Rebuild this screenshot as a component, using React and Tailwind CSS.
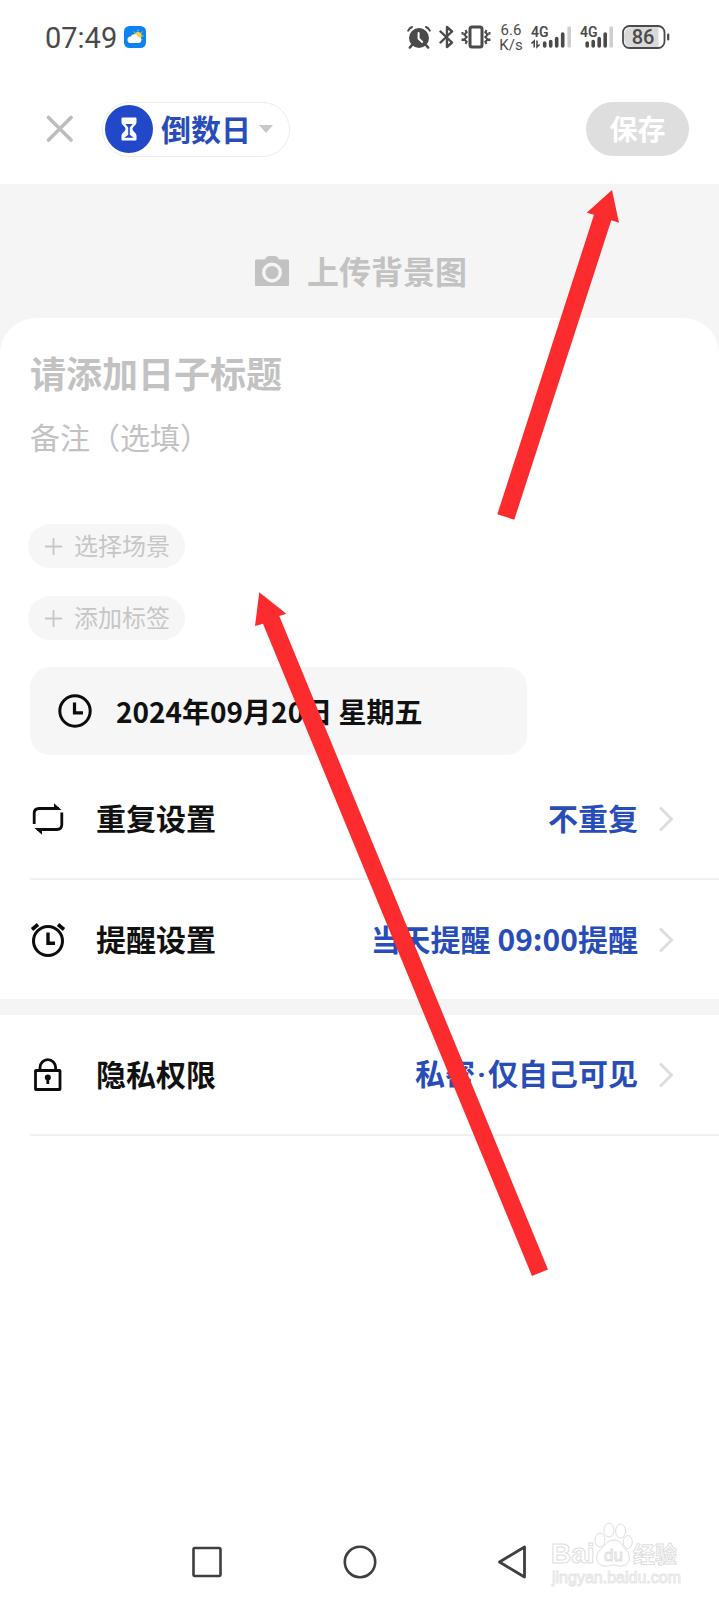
import React, { useState } from "react";

function StatusBar() {
  return (
    <div className="flex h-[74px] items-center justify-between pl-[45px] pr-[49px] text-[#4a4a4a]">
      <div className="flex items-center gap-[7px]">
        <span className="pt-[2px] font-[Roboto,sans-serif] text-[29px] leading-8">07:49</span>
        <svg className="h-[22px] w-[22px]" viewBox="0 0 22 22">
          <rect width="22" height="22" rx="5.5" fill="#0a84f2" />
          <path d="M14 3.6v2M9.6 5.6l1.4 1.2M18.6 5.6l-1.4 1.2M19.6 10h-1.8M18.4 14l-1-1" stroke="#f8cf4a" strokeWidth="0.9" />
          <circle cx="14" cy="9.6" r="3.7" fill="#f8cf4a" />
          <path d="M7 17a3.3 3.3 0 0 1-.4-6.6 4.2 4.2 0 0 1 7.6.6 3 3 0 0 1 .3 6z" fill="#fff" />
        </svg>
      </div>

      <div className="flex items-center">
        <svg className="h-6 w-6" viewBox="0 0 24 24" fill="none" stroke="currentColor" strokeLinecap="round">
          <circle cx="12" cy="13" r="10" fill="currentColor" stroke="none" />
          <path d="M5 20l-2.200 2.600M19 20l2.200 2.600" strokeWidth="2.400" />
          <path d="M1.200 5.600Q2.600 3 5 2M22.800 5.600Q21.400 3 19 2" strokeWidth="2" />
          <path d="M11.600 8v5.500l3.600 3.400" stroke="#fff" strokeWidth="2" />
        </svg>
        <svg className="ml-2 h-6 w-4" viewBox="0 0 16 24" fill="none" stroke="currentColor" strokeWidth="2.400" strokeLinecap="round" strokeLinejoin="round">
          <path d="M1.500 6.500L13 17.500l-5 4.500V2l5 4.500L1.500 17.500" />
        </svg>
        <svg className="ml-[6px] h-6 w-[30px]" viewBox="0 0 30 24" fill="none" stroke="currentColor" strokeWidth="2">
          <rect x="9" y="2" width="12" height="20" rx="2" strokeWidth="3" />
          <path d="M4.500 5l1.200 2.200-2.400 2.400 2.400 2.400-2.400 2.400 2.400 2.400-1.200 2.200M1.500 7v2.500M1.500 13.500v2.500M25.500 5l-1.200 2.200 2.400 2.400-2.400 2.400 2.400 2.400-2.400 2.400 1.200 2.200M28.500 7v2.500M28.500 13.500v2.500" strokeWidth="2" />
        </svg>
        <div className="ml-2 flex w-6 flex-col items-center pt-[2px] font-[Roboto,sans-serif] text-[15px] leading-[15px]">
          <span>6.6</span>
          <span>K/s</span>
        </div>
        <svg className="ml-2 h-6 w-[42px]" viewBox="0 0 42 24">
          <text x="0" y="12" fontFamily="Roboto, sans-serif" fontWeight="600" fontSize="14" fill="currentColor">4G</text>
          <path d="M0.500 18.500l2.700-2.500v6.500M6 15.500v6.500l2.700-2.500" stroke="currentColor" fill="none" strokeWidth="1.600" />
          <g stroke="currentColor" strokeWidth="3.600" strokeLinecap="round">
            <path d="M13.700 18v3M19.700 16.500v4.500M25.700 13.500v7.500M31.700 9v12" />
            <path d="M38.200 3v18" stroke="#cfcfcf" />
          </g>
        </svg>
        <svg className="ml-[7px] h-6 w-[34px]" viewBox="0 0 34 24">
          <text x="0" y="12" fontFamily="Roboto, sans-serif" fontWeight="600" fontSize="14" fill="currentColor">4G</text>
          <g stroke="currentColor" strokeWidth="3.600" strokeLinecap="round">
            <path d="M7.200 18v3M13.200 16.500v4.500M19.200 13.500v7.500M25.200 9v12" />
            <path d="M31.200 3v18" stroke="#cfcfcf" />
          </g>
        </svg>
        <svg className="ml-2 h-6 w-12" viewBox="0 0 48 24">
          <path d="M2 12q0-10 8-10h26.500v20H10Q2 22 2 12z" fill="#d9d9d9" />
          <rect x="1" y="1" width="41.500" height="22" rx="6.500" fill="none" stroke="currentColor" strokeWidth="1.800" />
          <path d="M46.200 9.500v5" stroke="currentColor" strokeWidth="2.200" strokeLinecap="round" />
          <text x="21" y="19" textAnchor="middle" fontFamily="Roboto, sans-serif" fontWeight="500" fontSize="20" fill="currentColor">86</text>
        </svg>
      </div>
    </div>
  );
}

function Header() {
  return (
    <header className="flex h-[110px] items-center pl-[46px] pr-[30px]">
      <button type="button" aria-label="关闭">
        <svg className="h-7 w-7" viewBox="0 0 28 28" stroke="#bdbdbd" strokeWidth="3.600" strokeLinecap="round">
          <path d="M2.500 2.500L25 25M25 2.500L2.500 25" />
        </svg>
      </button>
      <button type="button" className="ml-7 flex h-[55px] items-center rounded-full border border-[#ececec] pl-[2px] pr-4">
        <span className="flex h-12 w-12 items-center justify-center rounded-full bg-[#2148c8]">
          <svg className="h-6 w-4" viewBox="0 0 16 24" fill="none">
            <path d="M1.500 0.500h13q1 0 1 1V5c0 3.500-4 4-4 7s4 3.500 4 7v3.500q0 1-1 1h-13q-1 0-1-1V19c0-3.500 4-4 4-7s-4-3.500-4-7V1.500q0-1 1-1z" fill="#fff" />
            <path d="M4.300 7h7.400L8.800 10.500v7.300l4 3H3.200l4-3v-7.300z" fill="#2148c8" />
          </svg>
        </span>
        <span className="ml-2 pb-[3px] text-3xl font-bold leading-9 text-[#284db8]">倒数日</span>
        <svg className="ml-2 h-2 w-[14px]" viewBox="0 0 14 8">
          <path d="M0 0h14L7 8z" fill="#c8c8c8" />
        </svg>
      </button>
      <button type="button" className="ml-auto h-[54px] w-[103px] rounded-full bg-[#dedede] pb-[3px] text-[28px] font-bold leading-8 text-white">
        保存
      </button>
    </header>
  );
}

function Chip({ label }) {
  return (
    <button type="button" className="flex h-11 items-center gap-3 rounded-full bg-[#f6f6f6] pl-[17px] pr-[15px] text-2xl leading-8 text-[#c6c6c6]">
      <svg className="h-[17px] w-[17px]" viewBox="0 0 17 17" stroke="currentColor" strokeWidth="1.800">
        <path d="M8.500 0v17M0 8.500h17" />
      </svg>
      <span className="pb-[2px]">{label}</span>
    </button>
  );
}

function RepeatIcon() {
  return (
    <svg className="h-9 w-9" viewBox="0 0 36 36" fill="none" stroke="#0c0c0c" strokeWidth="2.800">
      <path d="M4.200 23V12.500q0-5 5-5H29" />
      <path d="M31.800 11.500v12q0 5-5 5H7" />
      <path d="M24 2.200l7.500 6.700H24zM12 33.800l-7.500-6.700H12z" fill="#0c0c0c" stroke="none" />
    </svg>
  );
}

function AlarmIcon() {
  return (
    <svg className="h-9 w-9" viewBox="0 0 36 36" fill="none" stroke="#0c0c0c" strokeWidth="3">
      <circle cx="18" cy="19" r="14.500" />
      <path d="M18 10.500v10.800h7" strokeWidth="3.400" />
      <path d="M2 7.500l6-5M34 7.500l-6-5" strokeWidth="3.600" />
    </svg>
  );
}

function LockIcon() {
  return (
    <svg className="h-9 w-9" viewBox="0 0 36 36" fill="none" stroke="#0c0c0c" strokeWidth="2.800">
      <rect x="5.500" y="13.500" width="24.500" height="19" rx="0.500" />
      <path d="M10 13v-2.500a7.800 7.800 0 0 1 15.600 0V13" />
      <circle cx="17.800" cy="20.500" r="3" fill="#0c0c0c" stroke="none" />
      <path d="M17.800 21v6" />
    </svg>
  );
}

function SettingRow({ icon, label, value, line }) {
  return (
    <div className="pl-[30px]">
      <button
        type="button"
        className={
          line
            ? "flex w-full items-center border-b-2 border-[#f1f1f1] pr-[45px] text-3xl font-bold"
            : "flex w-full items-center pr-[45px] text-3xl font-bold"
        }
      >
        <span className="flex h-[119px] items-center">{icon}</span>
        <span className="ml-[30px] pb-[3px] text-[#111]">{label}</span>
        <span className="ml-auto pb-[3px] text-[#284db8]">{value}</span>
        <svg className="ml-5 h-[26px] w-4" viewBox="0 0 16 26" fill="none" stroke="#dedede" strokeWidth="3">
          <path d="M2 1.500L13.500 13 2 24.500" />
        </svg>
      </button>
    </div>
  );
}

function NavBar() {
  return (
    <nav className="mt-auto grid h-[68px] grid-cols-3 px-[130px] pb-2">
      <button type="button" aria-label="最近任务" className="flex items-center justify-center">
        <svg className="h-9 w-9" viewBox="0 0 36 36" fill="none" stroke="#3f3f3f" strokeWidth="2.600">
          <rect x="4.500" y="4" width="27" height="28" rx="1.500" />
        </svg>
      </button>
      <button type="button" aria-label="主屏幕" className="flex items-center justify-center">
        <svg className="h-9 w-9" viewBox="0 0 36 36" fill="none" stroke="#3f3f3f" strokeWidth="2.600">
          <circle cx="18" cy="18" r="15.200" />
        </svg>
      </button>
      <button type="button" aria-label="返回" className="flex items-center justify-center">
        <svg className="h-9 w-9" viewBox="0 0 36 36" fill="none" stroke="#3f3f3f" strokeWidth="2.800" strokeLinejoin="round">
          <path d="M29.500 3v30L4.500 18z" />
        </svg>
      </button>
    </nav>
  );
}

function Watermark() {
  return (
    <svg className="pointer-events-none absolute bottom-0 right-[34px] h-20 w-[140px]" viewBox="0 0 140 80" fill="#fff" stroke="#dedede" strokeWidth="1">
      <text x="6" y="43" fontFamily="Liberation Sans, sans-serif" fontWeight="700" fontSize="28">Bai</text>
      <path d="M69 20c7 0 8 6 12 10 5 4 5 15-4 16-4 1-5-1-9-1s-5 2-9 1c-9-1-9-12-4-16 5-4 7-10 14-10z" />
      <ellipse cx="64" cy="10" rx="5" ry="7" />
      <ellipse cx="75.600" cy="11" rx="5" ry="7" />
      <ellipse cx="55" cy="20" rx="5" ry="7" />
      <ellipse cx="82.700" cy="22" rx="4.600" ry="6.500" />
      <text x="59" y="41" fontFamily="Liberation Sans, sans-serif" fontSize="17">du</text>
      <text x="88" y="42" fontFamily="Noto Sans CJK SC, sans-serif" fontWeight="700" fontSize="22">经验</text>
      <text x="7" y="63" fontFamily="Liberation Sans, sans-serif" fontSize="16" stroke="#e6e6e6">jingyan.baidu.com</text>
    </svg>
  );
}

function Arrows() {
  return (
    <svg className="pointer-events-none absolute left-0 top-0 h-[1600px] w-[719px]" viewBox="0 0 719 1600" fill="#fc2b2d">
      <path d="M612 190l7 32.700-7.700-2.400L514.300 519.700l-17-5.400L594 214.700l-7.300-2z" />
      <path d="M259.300 592.300l27 21.400-7 2.300L548 1269.500l-16 6.500L263 623.700l-8 2.300z" />
    </svg>
  );
}

function App() {
  const [title, setTitle] = useState("");
  const [note, setNote] = useState("");

  return (
    <div className="relative flex min-h-screen flex-col overflow-hidden bg-white font-['Noto_Sans_CJK_SC',sans-serif]">
      <StatusBar />
      <Header />

      <main className="bg-[#f5f5f5]">
        <button type="button" className="flex h-[134px] w-full items-center justify-center gap-[18px] pl-[3px] pt-10 text-[32px] font-bold leading-10 text-[#c2c2c2]">
          <svg className="h-[30px] w-[34px]" viewBox="0 0 34 30">
            <path d="M1 3.500h8.500L12 .8Q12.700 0 14 0h6q1.300 0 2 .8l2.500 2.700H33q1 0 1 1V29q0 1-1 1H1q-1 0-1-1V4.500q0-1 1-1z" fill="#c2c2c2" />
            <circle cx="17" cy="16.500" r="8.300" fill="#c2c2c2" stroke="#f5f5f5" strokeWidth="3.400" />
          </svg>
          <span className="pb-[3px]">上传背景图</span>
        </button>

        <div className="rounded-t-[36px] bg-white pt-[30px]">
          <div className="flex flex-col gap-5 px-[30px]">
            <input
              type="text"
              aria-label="标题"
              placeholder="请添加日子标题"
              value={title}
              onChange={(e) => setTitle(e.target.value)}
              className="h-12 w-full text-4xl font-bold text-[#111] outline-none placeholder:text-[#c2c2c2]"
            />
            <input
              type="text"
              aria-label="备注"
              placeholder="备注（选填）"
              value={note}
              onChange={(e) => setNote(e.target.value)}
              className="h-10 w-full text-3xl text-[#111] outline-none placeholder:text-[#c2c2c2]"
            />
          </div>

          <div className="mt-[68px] flex flex-col items-start gap-7 pl-7">
            <Chip label="选择场景" />
            <Chip label="添加标签" />
          </div>

          <div className="mt-[27px] px-[30px]">
            <button type="button" className="flex h-[88px] w-full max-w-[497px] items-center gap-6 rounded-[20px] bg-[#f6f6f6] pl-7 text-[28px] font-bold text-[#111]">
              <svg className="h-[34px] w-[34px]" viewBox="0 0 34 34" fill="none" stroke="#0c0c0c" strokeWidth="3">
                <circle cx="17" cy="17" r="15.200" />
                <path d="M16.500 8.500v10.300h8.500" strokeWidth="3.200" />
              </svg>
              2024年09月20日 星期五
            </button>
          </div>

          <div className="pt-1">
            <SettingRow icon={<RepeatIcon />} label="重复设置" value="不重复" line />
            <SettingRow icon={<AlarmIcon />} label="提醒设置" value="当天提醒 09:00提醒" />
          </div>
          <div className="h-4 bg-[#f5f5f5]" />
          <SettingRow
            icon={<LockIcon />}
            label="隐私权限"
            value={
              <>
                私密<span className="mx-[2px] font-[Roboto,sans-serif]">·</span>仅自己可见
              </>
            }
            line
          />
        </div>
      </main>

      <NavBar />
      <Watermark />
      <Arrows />
    </div>
  );
}

export default App;
